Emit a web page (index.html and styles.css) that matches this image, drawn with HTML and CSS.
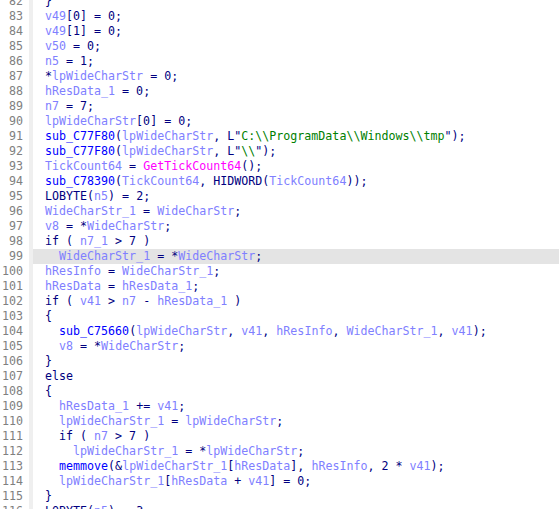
FILE: index.html
```html
<!DOCTYPE html>
<html>
<head>
<meta charset="utf-8">
<link rel="stylesheet" href="styles.css">
</head>
<body>
<div class="view">
<div class="line"><span class="num">82</span><span class="bar"></span><span class="code"><span class="p">}</span></span></div>
<div class="line"><span class="num">83</span><span class="bar"></span><span class="code"><span class="v">v49</span><span class="p">[0] = 0;</span></span></div>
<div class="line"><span class="num">84</span><span class="bar"></span><span class="code"><span class="v">v49</span><span class="p">[1] = 0;</span></span></div>
<div class="line"><span class="num">85</span><span class="bar"></span><span class="code"><span class="v">v50</span><span class="p"> = 0;</span></span></div>
<div class="line"><span class="num">86</span><span class="bar"></span><span class="code"><span class="v">n5</span><span class="p"> = 1;</span></span></div>
<div class="line"><span class="num">87</span><span class="bar"></span><span class="code"><span class="p">*</span><span class="v">lpWideCharStr</span><span class="p"> = 0;</span></span></div>
<div class="line"><span class="num">88</span><span class="bar"></span><span class="code"><span class="v">hResData_1</span><span class="p"> = 0;</span></span></div>
<div class="line"><span class="num">89</span><span class="bar"></span><span class="code"><span class="v">n7</span><span class="p"> = 7;</span></span></div>
<div class="line"><span class="num">90</span><span class="bar"></span><span class="code"><span class="v">lpWideCharStr</span><span class="p">[0] = 0;</span></span></div>
<div class="line"><span class="num">91</span><span class="bar"></span><span class="code"><span class="f">sub_C77F80</span><span class="p">(</span><span class="v">lpWideCharStr</span><span class="p">, L"</span><span class="s">C:\\ProgramData\\Windows\\tmp</span><span class="p">");</span></span></div>
<div class="line"><span class="num">92</span><span class="bar"></span><span class="code"><span class="f">sub_C77F80</span><span class="p">(</span><span class="v">lpWideCharStr</span><span class="p">, L"</span><span class="s">\\</span><span class="p">");</span></span></div>
<div class="line"><span class="num">93</span><span class="bar"></span><span class="code"><span class="v">TickCount64</span><span class="p"> = </span><span class="i">GetTickCount64</span><span class="p">();</span></span></div>
<div class="line"><span class="num">94</span><span class="bar"></span><span class="code"><span class="f">sub_C78390</span><span class="p">(</span><span class="v">TickCount64</span><span class="p">, HIDWORD(</span><span class="v">TickCount64</span><span class="p">));</span></span></div>
<div class="line"><span class="num">95</span><span class="bar"></span><span class="code"><span class="p">LOBYTE(</span><span class="v">n5</span><span class="p">) = 2;</span></span></div>
<div class="line"><span class="num">96</span><span class="bar"></span><span class="code"><span class="v">WideCharStr_1</span><span class="p"> = </span><span class="v">WideCharStr</span><span class="p">;</span></span></div>
<div class="line"><span class="num">97</span><span class="bar"></span><span class="code"><span class="v">v8</span><span class="p"> = *</span><span class="v">WideCharStr</span><span class="p">;</span></span></div>
<div class="line"><span class="num">98</span><span class="bar"></span><span class="code"><span class="p">if ( </span><span class="v">n7_1</span><span class="p"> &gt; 7 )</span></span></div>
<div class="line"><span class="num">99</span><span class="bar"></span><span class="code hl"><span class="p">  </span><span class="v">WideCharStr_1</span><span class="p"> = *</span><span class="v">WideCharStr</span><span class="p">;</span></span></div>
<div class="line"><span class="num">100</span><span class="bar"></span><span class="code"><span class="v">hResInfo</span><span class="p"> = </span><span class="v">WideCharStr_1</span><span class="p">;</span></span></div>
<div class="line"><span class="num">101</span><span class="bar"></span><span class="code"><span class="v">hResData</span><span class="p"> = </span><span class="v">hResData_1</span><span class="p">;</span></span></div>
<div class="line"><span class="num">102</span><span class="bar"></span><span class="code"><span class="p">if ( </span><span class="v">v41</span><span class="p"> &gt; </span><span class="v">n7</span><span class="p"> - </span><span class="v">hResData_1</span><span class="p"> )</span></span></div>
<div class="line"><span class="num">103</span><span class="bar"></span><span class="code"><span class="p">{</span></span></div>
<div class="line"><span class="num">104</span><span class="bar"></span><span class="code"><span class="p">  </span><span class="f">sub_C75660</span><span class="p">(</span><span class="v">lpWideCharStr</span><span class="p">, </span><span class="v">v41</span><span class="p">, </span><span class="v">hResInfo</span><span class="p">, </span><span class="v">WideCharStr_1</span><span class="p">, </span><span class="v">v41</span><span class="p">);</span></span></div>
<div class="line"><span class="num">105</span><span class="bar"></span><span class="code"><span class="p">  </span><span class="v">v8</span><span class="p"> = *</span><span class="v">WideCharStr</span><span class="p">;</span></span></div>
<div class="line"><span class="num">106</span><span class="bar"></span><span class="code"><span class="p">}</span></span></div>
<div class="line"><span class="num">107</span><span class="bar"></span><span class="code"><span class="p">else</span></span></div>
<div class="line"><span class="num">108</span><span class="bar"></span><span class="code"><span class="p">{</span></span></div>
<div class="line"><span class="num">109</span><span class="bar"></span><span class="code"><span class="p">  </span><span class="v">hResData_1</span><span class="p"> += </span><span class="v">v41</span><span class="p">;</span></span></div>
<div class="line"><span class="num">110</span><span class="bar"></span><span class="code"><span class="p">  </span><span class="v">lpWideCharStr_1</span><span class="p"> = </span><span class="v">lpWideCharStr</span><span class="p">;</span></span></div>
<div class="line"><span class="num">111</span><span class="bar"></span><span class="code"><span class="p">  if ( </span><span class="v">n7</span><span class="p"> &gt; 7 )</span></span></div>
<div class="line"><span class="num">112</span><span class="bar"></span><span class="code"><span class="p">    </span><span class="v">lpWideCharStr_1</span><span class="p"> = *</span><span class="v">lpWideCharStr</span><span class="p">;</span></span></div>
<div class="line"><span class="num">113</span><span class="bar"></span><span class="code"><span class="p">  </span><span class="f">memmove</span><span class="p">(&amp;</span><span class="v">lpWideCharStr_1</span><span class="p">[</span><span class="v">hResData</span><span class="p">], </span><span class="v">hResInfo</span><span class="p">, 2 * </span><span class="v">v41</span><span class="p">);</span></span></div>
<div class="line"><span class="num">114</span><span class="bar"></span><span class="code"><span class="p">  </span><span class="v">lpWideCharStr_1</span><span class="p">[</span><span class="v">hResData</span><span class="p"> + </span><span class="v">v41</span><span class="p">] = 0;</span></span></div>
<div class="line"><span class="num">115</span><span class="bar"></span><span class="code"><span class="p">}</span></span></div>
<div class="line"><span class="num">116</span><span class="bar"></span><span class="code"><span class="p">LOBYTE(</span><span class="v">n5</span><span class="p">) = 3;</span></span></div>
</div>
</body>
</html>
```
FILE: styles.css
```css
html, body {
  margin: 0;
  padding: 0;
  background: #ffffff;
  overflow: hidden;
}
.view {
  margin-top: -6px;
  font-family: "DejaVu Sans Mono", "Liberation Mono", monospace;
  font-size: 11.65px;
  line-height: 15px;
}
.line {
  display: flex;
  height: 15px;
}
.num {
  width: 23px;
  flex: none;
  text-align: right;
  color: #808080;
}
.bar {
  width: 4px;
  flex: none;
  margin-left: 6px;
  background: #efefef;
}
.code {
  flex: 1;
  padding-left: 12px;
  white-space: pre;
}
.hl {
  background: #e4e4e4;
}
.p { color: #000080; }
.v { color: #8080ff; }
.f { color: #0000ff; }
.i { color: #ff00ff; }
.s { color: #008000; }
```
